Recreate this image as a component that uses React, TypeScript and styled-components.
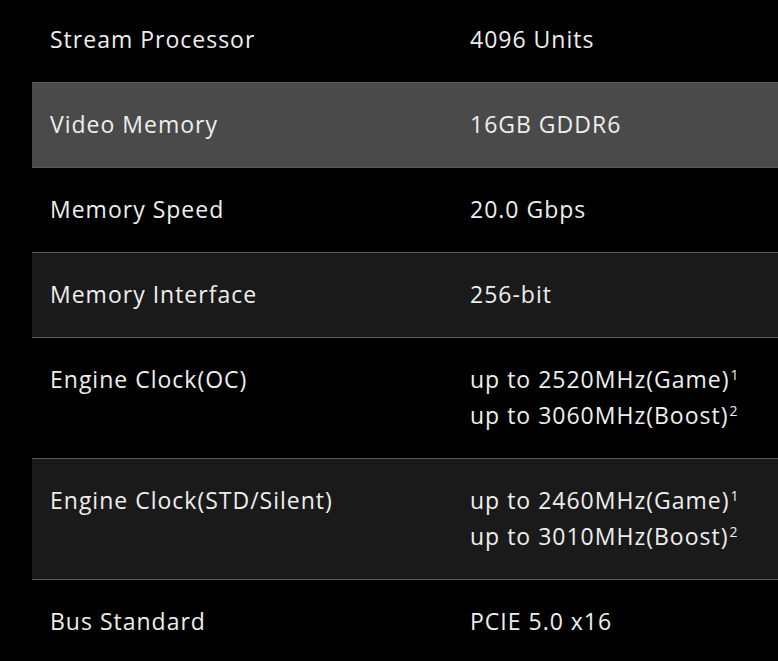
import styled, { createGlobalStyle } from 'styled-components';

const GlobalStyle = createGlobalStyle`
  html, body {
    margin: 0;
    padding: 0;
    background: #000;
    overflow: hidden;
  }
  body {
    font-family: 'Open Sans', 'Noto Sans', sans-serif;
  }
`;

type Spec = {
  label: string;
  values: { text: string; sup?: string }[];
};

const specs: Spec[] = [
  { label: 'Stream Processor', values: [{ text: '4096 Units' }] },
  { label: 'Video Memory', values: [{ text: '16GB GDDR6' }] },
  { label: 'Memory Speed', values: [{ text: '20.0 Gbps' }] },
  { label: 'Memory Interface', values: [{ text: '256-bit' }] },
  {
    label: 'Engine Clock(OC)',
    values: [
      { text: 'up to 2520MHz(Game)', sup: '1' },
      { text: 'up to 3060MHz(Boost)', sup: '2' },
    ],
  },
  {
    label: 'Engine Clock(STD/Silent)',
    values: [
      { text: 'up to 2460MHz(Game)', sup: '1' },
      { text: 'up to 3010MHz(Boost)', sup: '2' },
    ],
  },
  { label: 'Bus Standard', values: [{ text: 'PCIE 5.0 x16' }] },
];

const rowTone = (i: number) => {
  if (i === 1) return '#4a4a4a';
  if (i % 2 === 1) return '#1a1a1a';
  return '#000';
};

const App = () => {
  return (
    <>
      <GlobalStyle />
      <SpecTable>
        {specs.map((spec, i) => (
          <Row key={spec.label} tone={rowTone(i)} first={i === 0}>
            <Label>{spec.label}</Label>
            <Value>
              {spec.values.map(v => (
                <Line key={v.text}>
                  {v.text}
                  {v.sup && <Sup>{v.sup}</Sup>}
                </Line>
              ))}
            </Value>
          </Row>
        ))}
      </SpecTable>
    </>
  );
};

const SpecTable = styled.div`
  margin: -3px 0 0 32px;
  display: flex;
  flex-direction: column;
`;

const Row = styled.div<{ tone: string; first: boolean }>`
  display: grid;
  grid-template-columns: 420px 1fr;
  padding: 23px 18px 25px;
  background-color: ${props => props.tone};
  border-top: 1px solid ${props => (props.first ? 'transparent' : '#5a5a5a')};
  color: #eeeeee;
  font-size: 23px;
  line-height: 36px;
  letter-spacing: 1px;
`;

const Label = styled.div`
  white-space: nowrap;
`;

const Value = styled.div`
  display: flex;
  flex-direction: column;
  min-width: 0;
`;

const Line = styled.span`
  white-space: nowrap;
`;

const Sup = styled.sup`
  font-size: 14px;
  line-height: 0;
  vertical-align: 0;
  position: relative;
  top: -8px;
  margin-left: 1px;
  letter-spacing: 0;
`;

export default App;
